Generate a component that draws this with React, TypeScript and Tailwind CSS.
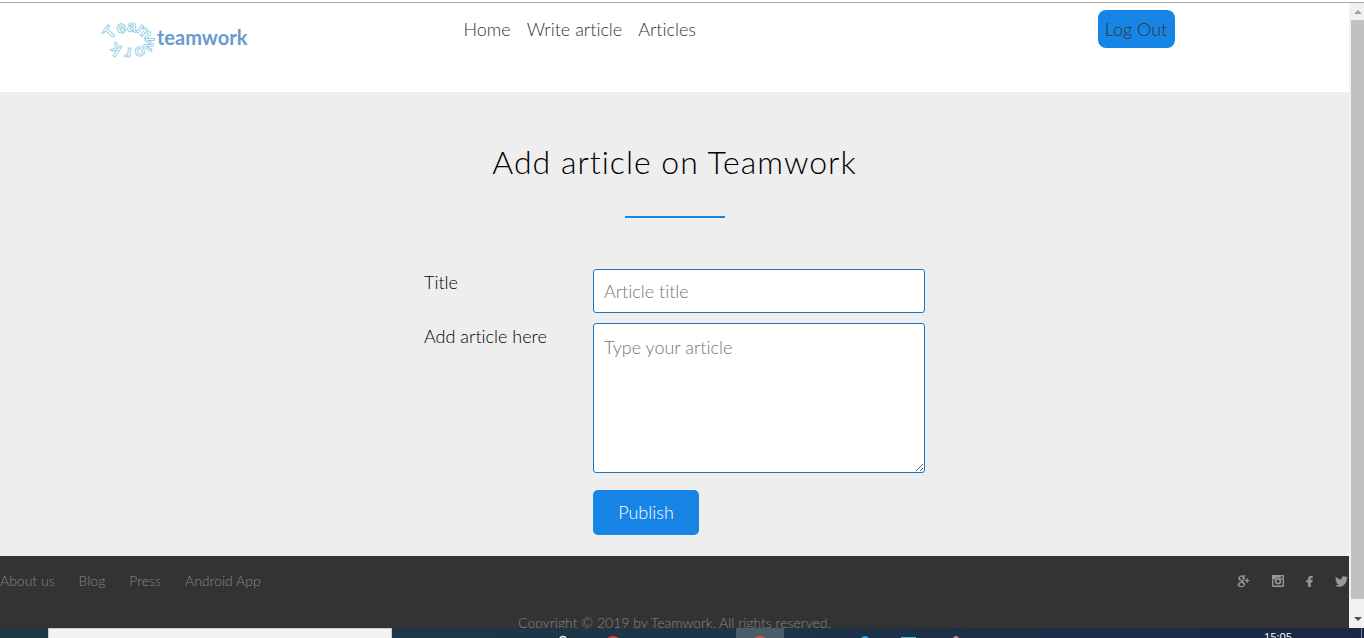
import React from "react";
import { FaFacebookF, FaTwitter } from "react-icons/fa";
import { TiSocialGooglePlus } from "react-icons/ti";

const ringLetters = [
  { char: "T", x: 11, y: 15, angle: -50 },
  { char: "e", x: 22, y: 10, angle: -20 },
  { char: "a", x: 33, y: 9, angle: 5 },
  { char: "m", x: 45, y: 14, angle: 40 },
  { char: "w", x: 50, y: 26, angle: 105 },
  { char: "o", x: 41, y: 34, angle: 150 },
  { char: "r", x: 29, y: 35, angle: 185 },
  { char: "k", x: 17, y: 31, angle: 215 },
];

function Logo() {
  return (
    <svg viewBox="0 0 160 44" className="h-11 w-40 overflow-visible" role="img" aria-label="teamwork">
      <g fontFamily="Liberation Sans, sans-serif" fontWeight="700" fontSize="17" fill="#fff" stroke="#8ccbe4" strokeWidth="0.8" textAnchor="middle">
        {ringLetters.map((l) => (
          <text key={l.char} y="5" transform={`translate(${l.x} ${l.y}) rotate(${l.angle})`}>
            {l.char}
          </text>
        ))}
      </g>
      <text x="58" y="27" fontFamily="Lato, sans-serif" fontWeight="700" fontSize="20" fill="#659bd0">teamwork</text>
    </svg>
  );
}

function InstagramIcon() {
  return (
    <svg viewBox="0 0 12 12" className="h-3 w-3" fill="none" stroke="currentColor" aria-hidden="true">
      <path d="M0.700 4.800V10.500a.8.800 0 0 0 .8.800h9a.8.800 0 0 0 .8-.8V4.800" strokeWidth="1.400" />
      <path d="M1 0h10a1 1 0 0 1 1 1v3.600H9.300a3.600 3.600 0 0 0-6.600 0H0V1a1 1 0 0 1 1-1zM8.600 1.200v2h2v-2z" fill="currentColor" fillRule="evenodd" stroke="none" />
      <circle cx="6" cy="6.300" r="2.400" strokeWidth="1.600" />
    </svg>
  );
}

const navLinks = ["Home", "Write article", "Articles"];
const footerLinks = ["About us", "Blog", "Press", "Android App"];
const socials = [
  { name: "Google Plus", icon: <TiSocialGooglePlus size={18} stroke="currentColor" strokeWidth={0.8} /> },
  { name: "Instagram", icon: <InstagramIcon /> },
  { name: "Facebook", icon: <FaFacebookF size={11} stroke="currentColor" strokeWidth={24} /> },
  { name: "Twitter", icon: <FaTwitter size={13} /> },
];

function Header() {
  return (
    <header className="h-[89px] shrink-0 bg-white">
      <div className="mx-auto flex max-w-[1152px] items-start pt-[7px]">
        <a href="#home" className="mt-2">
          <Logo />
        </a>
        <nav className="ml-[205px] flex gap-4 pt-[7px]">
          {navLinks.map((label) => (
            <a key={label} href="#nav" className="text-[18px] leading-6 text-[#333]">
              {label}
            </a>
          ))}
        </nav>
        <button className="mr-[76px] ml-auto h-[38px] w-[77px] rounded-lg bg-[#1785e5] text-[18px] leading-6 text-[#333]">
          Log Out
        </button>
      </div>
    </header>
  );
}

function ArticleForm() {
  const field =
    "block w-full rounded-[3px] border border-[#1b78c8] bg-white px-2.5 text-[18px] font-light leading-6 text-[#555] placeholder:text-[#757575] placeholder:opacity-100 outline-none";
  return (
    <main className="shrink-0 bg-[#eee] pt-[47px] pb-[21px] text-black">
      <h1 className="text-center text-[32px] leading-[46px] tracking-[1px]">Add article on Teamwork</h1>
      <div className="mx-auto mt-[31px] h-0.5 w-[100px] bg-[#1785e5]" />
      <form className="mx-auto mt-[51px] grid max-w-[501px] grid-cols-[169px_1fr] text-[18px] leading-[26px]">
        <label htmlFor="title">Title</label>
        <input id="title" placeholder="Article title" className={field + " mb-2.5 h-11"} />
        <label htmlFor="article">Add article here</label>
        <textarea id="article" placeholder="Type your article" className={field + " h-[150px] resize py-[11px]"} />
        <button type="button" className="col-start-2 mt-[17px] h-[45px] w-[106px] rounded-[5px] bg-[#1785e5] pb-0.5 text-white">
          Publish
        </button>
      </form>
    </main>
  );
}

function Footer() {
  return (
    <footer className="flex-1 bg-[#333] text-[14px] leading-5 text-[#888]">
      <div className="flex items-center justify-between pt-[15px] pr-px">
        <nav className="flex gap-6">
          {footerLinks.map((label) => (
            <a key={label} href="#footer">
              {label}
            </a>
          ))}
        </nav>
        <div className="flex items-center gap-5">
          {socials.map((s) => (
            <a key={s.name} href="#social" aria-label={s.name} className="text-[#999]">
              {s.icon}
            </a>
          ))}
        </div>
      </div>
      <p className="mt-[22px] text-center">Copyright © 2019 by Teamwork. All rights reserved.</p>
    </footer>
  );
}

function Scrollbar() {
  return (
    <div className="flex w-[15px] shrink-0 flex-col items-end bg-[#f1f1f1]" aria-hidden="true">
      <div className="flex h-[17px] w-[13px] items-center justify-center">
        <svg viewBox="0 0 8 4" className="h-1 w-2" fill="#a3a3a3"><path d="M0 4l4-4 4 4z" /></svg>
      </div>
      <div className="w-[13px] flex-1 bg-[#c1c1c1]" />
      <div className="flex h-[29px] w-[13px] items-end justify-center pb-[7px]">
        <svg viewBox="0 0 8 4" className="h-1 w-2" fill="#505050"><path d="M0 0l4 4 4-4z" /></svg>
      </div>
    </div>
  );
}

function Taskbar() {
  return (
    <div className="flex h-2.5 shrink-0 overflow-hidden bg-linear-to-r from-[#203746] via-[#1e3547] to-[#1c2744]">
      <div className="ml-12 w-[344px] border border-b-0 border-[#ccc] bg-[#f2f2f2]" />
      <svg viewBox="0 0 600 10" className="ml-[158px] h-2.5 w-[600px]" aria-hidden="true">
        <circle cx="13" cy="12" r="3.500" fill="none" stroke="#fff" strokeWidth="1.500" />
        <circle cx="63" cy="17" r="9" fill="#d8443a" />
        <path d="M186 0h48v10h-48z" fill="#4b5c69" />
        <circle cx="210" cy="17" r="9" fill="#c75550" />
        <circle cx="315" cy="12" r="4" fill="#36a4dd" />
        <path d="M351 9h15v1h-15z" fill="#58b9c7" />
        <circle cx="406" cy="11" r="3" fill="#d87b8a" />
      </svg>
      <span className="ml-[114px] pt-0.5 font-['Open_Sans',sans-serif] text-[11px] leading-[14px] font-medium text-white">15:05</span>
      <span className="mr-0.5 ml-auto w-px bg-[#77809a]" />
    </div>
  );
}

export default function App() {
  return (
    <div className="flex h-screen flex-col overflow-hidden bg-white font-['Lato',sans-serif] font-light [font-variant-ligatures:none]">
      <div className="mt-0.5 h-px shrink-0 bg-[#aaa]" />
      <div className="flex min-h-0 flex-1">
        <div className="flex min-w-0 flex-1 flex-col overflow-hidden">
          <Header />
          <ArticleForm />
          <Footer />
        </div>
        <Scrollbar />
      </div>
      <Taskbar />
    </div>
  );
}
